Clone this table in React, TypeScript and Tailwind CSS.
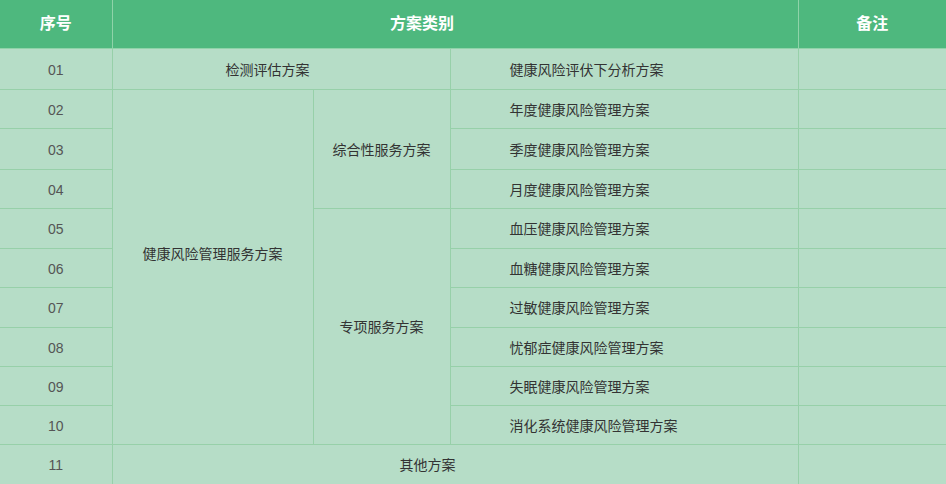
import React from 'react';

// 方案列表 (第四列)
const plans = [
  '健康风险评伏下分析方案',
  '年度健康风险管理方案',
  '季度健康风险管理方案',
  '月度健康风险管理方案',
  '血压健康风险管理方案',
  '血糖健康风险管理方案',
  '过敏健康风险管理方案',
  '忧郁症健康风险管理方案',
  '失眠健康风险管理方案',
  '消化系统健康风险管理方案',
];

const rowHeights = ['h-[41px]', 'h-[39px]', 'h-[41px]', 'h-[39px]', 'h-[40px]', 'h-[39px]', 'h-[40px]', 'h-[39px]', 'h-[39px]', 'h-[39px]'];

const cell = 'border border-[#97d0a9] p-0 pt-[3px]';
const numCell = `${cell} text-center text-[14px] text-[#555]`;

const App: React.FC = () => {
  return (
    <div className="w-[946px] h-[484px] overflow-hidden bg-[#b6ddc7] font-['Liberation_Sans','Noto_Sans_CJK_SC',sans-serif]">
      <table className="w-[946px] table-fixed border-collapse">
        <colgroup>
          <col className="w-[112px]" />
          <col className="w-[201px]" />
          <col className="w-[137px]" />
          <col className="w-[348px]" />
          <col className="w-[148px]" />
        </colgroup>
        <thead>
          <tr className="h-[48px] bg-[#4eb87e] text-white text-[16px] font-bold">
            <th className="border border-[#8fd3a9] border-t-0 border-l-0 text-center">序号</th>
            <th colSpan={3} className="border border-[#8fd3a9] border-t-0 text-center pr-[66px]">
              方案类别
            </th>
            <th className="border border-[#8fd3a9] border-t-0 border-r-0 text-center">备注</th>
          </tr>
        </thead>
        <tbody className="text-[14px] text-[#333]">
          {plans.map((plan, i) => (
            <tr key={plan} className={rowHeights[i]}>
              <td className={`${numCell} border-l-0`}>{String(i + 1).padStart(2, '0')}</td>
              {i === 0 && (
                <td colSpan={2} className={`${cell} text-left pl-[113px]`}>
                  检测评估方案
                </td>
              )}
              {i === 1 && (
                <td rowSpan={9} className={`${cell} text-center align-middle pb-[27px]`}>
                  健康风险管理服务方案
                </td>
              )}
              {i === 1 && (
                <td rowSpan={3} className={`${cell} text-center`}>
                  综合性服务方案
                </td>
              )}
              {i === 4 && (
                <td rowSpan={6} className={`${cell} text-center`}>
                  专项服务方案
                </td>
              )}
              <td className={`${cell} text-left pl-[59px]`}>{plan}</td>
              <td className={`${cell} border-r-0`}></td>
            </tr>
          ))}
          <tr className="h-[40px]">
            <td className={`${numCell} border-l-0 border-b-0`}>11</td>
            <td colSpan={3} className={`${cell} border-b-0 text-left pl-[287px]`}>
              其他方案
            </td>
            <td className={`${cell} border-b-0 border-r-0`}></td>
          </tr>
        </tbody>
      </table>
    </div>
  );
};

export default App;
